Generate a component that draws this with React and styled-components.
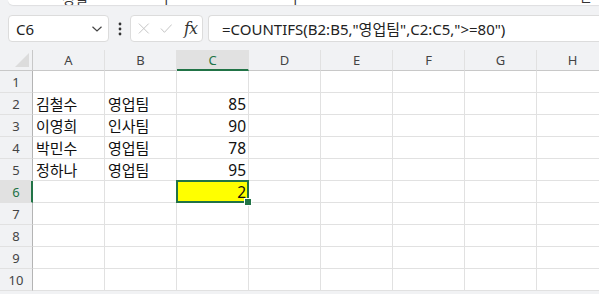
import React from "react";
import styled, { createGlobalStyle, css } from "styled-components";

const GlobalStyle = createGlobalStyle`
  html, body {
    margin: 0;
    padding: 0;
    background: #f1f2f4;
    overflow: hidden;
  }
  * { box-sizing: border-box; }
`;

const GREEN = "#217346";
const GRID = "#e1e1e1";

const Page = styled.div`
  width: 599px;
  height: 294px;
  overflow: hidden;
  display: flex;
  flex-direction: column;
  font-family: "Noto Sans", "Noto Sans CJK KR", sans-serif;
`;

//Ribbon (bottom edge only)
const Ribbon = styled.div`
  height: 5px;
  margin-left: 8px;
  background: #fff;
  border-radius: 0 0 0 8px;
  box-shadow: 0 1px 1px rgba(0, 0, 0, 0.08);
  position: relative;
  overflow: hidden;
  display: flex;
`;

const RibbonLabel = styled.span`
  position: relative;
  top: -12px;
  margin-left: ${(p) => p.$at}px;
  font-size: 14px;
  color: #333;
  font-family: "Noto Sans CJK KR", sans-serif;
`;

//Formula bar
const FormulaRow = styled.div`
  display: flex;
  align-items: center;
  height: 27px;
  margin-top: 10px;
  padding-left: 8px;
`;

const boxStyle = css`
  height: 27px;
  background: #fff;
  border: 1px solid #dcdcdc;
  border-radius: 4px;
  display: flex;
  align-items: center;
`;

const NameBox = styled.div`
  ${boxStyle}
  width: 101px;
  padding: 0 5px 0 7px;
  justify-content: space-between;
  font-size: 15px;
  color: #222;
`;

const Dots = styled.div`
  width: 21px;
  display: flex;
  justify-content: center;
`;

const FxBox = styled.div`
  ${boxStyle}
  width: 73px;
  padding: 0 5px 0 7px;
  gap: 10px;
`;

const Fx = styled.span`
  font-family: "DejaVu Serif", "Liberation Serif", serif;
  font-style: italic;
  font-size: 16px;
  color: #333;
  margin-left: 2px;
  letter-spacing: -1px;
`;

const FormulaInput = styled.div`
  ${boxStyle}
  flex: 1;
  margin-left: 5px;
  border-right: none;
  border-radius: 4px 0 0 4px;
  padding-left: 13px;
  font-size: 15px;
  color: #222;
  font-family: "Noto Sans", "Noto Sans CJK KR", sans-serif;
  white-space: nowrap;
`;

//Sheet grid
const Sheet = styled.div`
  margin-top: 8px;
  display: grid;
  grid-template-columns: 33px repeat(8, 72px);
  grid-template-rows: 21px repeat(10, 22px);
  background: #fff;
`;

const Corner = styled.div`
  background: #f1f2f4;
  border-right: 1px solid #c8c8c8;
  border-bottom: 1px solid #c8c8c8;
  position: relative;
  &::after {
    content: "";
    position: absolute;
    right: 3px;
    bottom: 3px;
    border-style: solid;
    border-width: 0 0 14px 14px;
    border-color: transparent transparent #dcdcdc transparent;
  }
`;

const ColHeader = styled.div`
  background: ${(p) => (p.$active ? "#e1e1e1" : "#f1f2f4")};
  border-right: 1px solid ${GRID};
  border-bottom: ${(p) => (p.$active ? `2px solid ${GREEN}` : "1px solid #c8c8c8")};
  color: ${(p) => (p.$active ? GREEN : "#444")};
  font-size: 13px;
  display: flex;
  align-items: center;
  justify-content: center;
  padding-top: ${(p) => (p.$active ? "1px" : "0")};
`;

const RowHeader = styled.div`
  background: ${(p) => (p.$active ? "#e1e1e1" : "#f1f2f4")};
  border-right: ${(p) => (p.$active ? `2px solid ${GREEN}` : "1px solid #b4b4b4")};
  border-bottom: 1px solid ${GRID};
  color: ${(p) => (p.$active ? GREEN : "#444")};
  font-size: 13px;
  display: flex;
  align-items: center;
  justify-content: center;
  padding-left: ${(p) => (p.$active ? "1px" : "0")};
`;

const Cell = styled.div`
  border-right: 1px solid ${GRID};
  border-bottom: 1px solid ${GRID};
  color: #111;
  display: flex;
  align-items: center;
  white-space: nowrap;
  justify-content: ${(p) => (p.$num ? "flex-end" : "flex-start")};
  padding: ${(p) => (p.$num ? "0 2px 0 0" : "0 0 0 3px")};
  font-size: ${(p) => (p.$num ? "15.5px" : "15px")};
  font-family: ${(p) =>
    p.$num
      ? `"Noto Sans", "Noto Sans CJK KR", sans-serif`
      : `"Noto Sans CJK KR", "Noto Sans", sans-serif`};
  ${(p) =>
    p.$selected &&
    css`
      background: #ffff00;
      position: relative;
      &::before {
        content: "";
        position: absolute;
        left: -1px;
        top: -1px;
        right: -1px;
        bottom: -1px;
        border: 2px solid ${GREEN};
        pointer-events: none;
      }
      &::after {
        content: "";
        position: absolute;
        right: -4px;
        bottom: -4px;
        width: 6px;
        height: 6px;
        background: ${GREEN};
        border: 1px solid #fff;
      }
    `}
`;

const Chevron = () => (
  <svg width="12" height="8" viewBox="0 0 12 8">
    <path d="M1.5 1.8 L6 6 L10.5 1.8" fill="none" stroke="#444" strokeWidth="1.2" />
  </svg>
);

const VDots = () => (
  <svg width="4" height="14" viewBox="0 0 4 14">
    <circle cx="2" cy="2" r="1.4" fill="#333" />
    <circle cx="2" cy="7" r="1.4" fill="#333" />
    <circle cx="2" cy="12" r="1.4" fill="#333" />
  </svg>
);

const Cross = () => (
  <svg width="13" height="13" viewBox="0 0 13 13">
    <path d="M1 1 L12 12 M12 1 L1 12" stroke="#c4c4c4" strokeWidth="1.1" fill="none" />
  </svg>
);

const Check = () => (
  <svg width="14" height="11" viewBox="0 0 14 11">
    <path d="M1 5.5 L5 9.8 L13.2 1" stroke="#c4c4c4" strokeWidth="1.1" fill="none" />
  </svg>
);

const columns = ["A", "B", "C", "D", "E", "F", "G", "H"];

const data = [
  [],
  ["김철수", "영업팀", 85],
  ["이영희", "인사팀", 90],
  ["박민수", "영업팀", 78],
  ["정하나", "영업팀", 95],
  [null, null, 2],
  [],
  [],
  [],
  [],
];

export default function App() {
  return (
    <Page>
      <GlobalStyle />
      <Ribbon>
        <RibbonLabel $at={54}>정렬</RibbonLabel>
        <RibbonLabel $at={72}>ㅣ</RibbonLabel>
        <RibbonLabel $at={116}>ㅣ</RibbonLabel>
        <RibbonLabel $at={278}>ㄹ</RibbonLabel>
      </Ribbon>
      <FormulaRow>
        <NameBox>
          <span>C6</span>
          <Chevron />
        </NameBox>
        <Dots>
          <VDots />
        </Dots>
        <FxBox>
          <Cross />
          <Check />
          <Fx>fx</Fx>
        </FxBox>
        <FormulaInput>=COUNTIFS(B2:B5,"영업팀",C2:C5,"&gt;=80")</FormulaInput>
      </FormulaRow>
      <Sheet>
        <Corner />
        {columns.map((c) => (
          <ColHeader key={c} $active={c === "C"}>
            {c}
          </ColHeader>
        ))}
        {data.map((row, r) => (
          <React.Fragment key={r}>
            <RowHeader $active={r === 5}>{r + 1}</RowHeader>
            {columns.map((c, i) => {
              const v = row[i];
              return (
                <Cell key={c} $num={typeof v === "number"} $selected={r === 5 && c === "C"}>
                  {v ?? ""}
                </Cell>
              );
            })}
          </React.Fragment>
        ))}
      </Sheet>
    </Page>
  );
}
